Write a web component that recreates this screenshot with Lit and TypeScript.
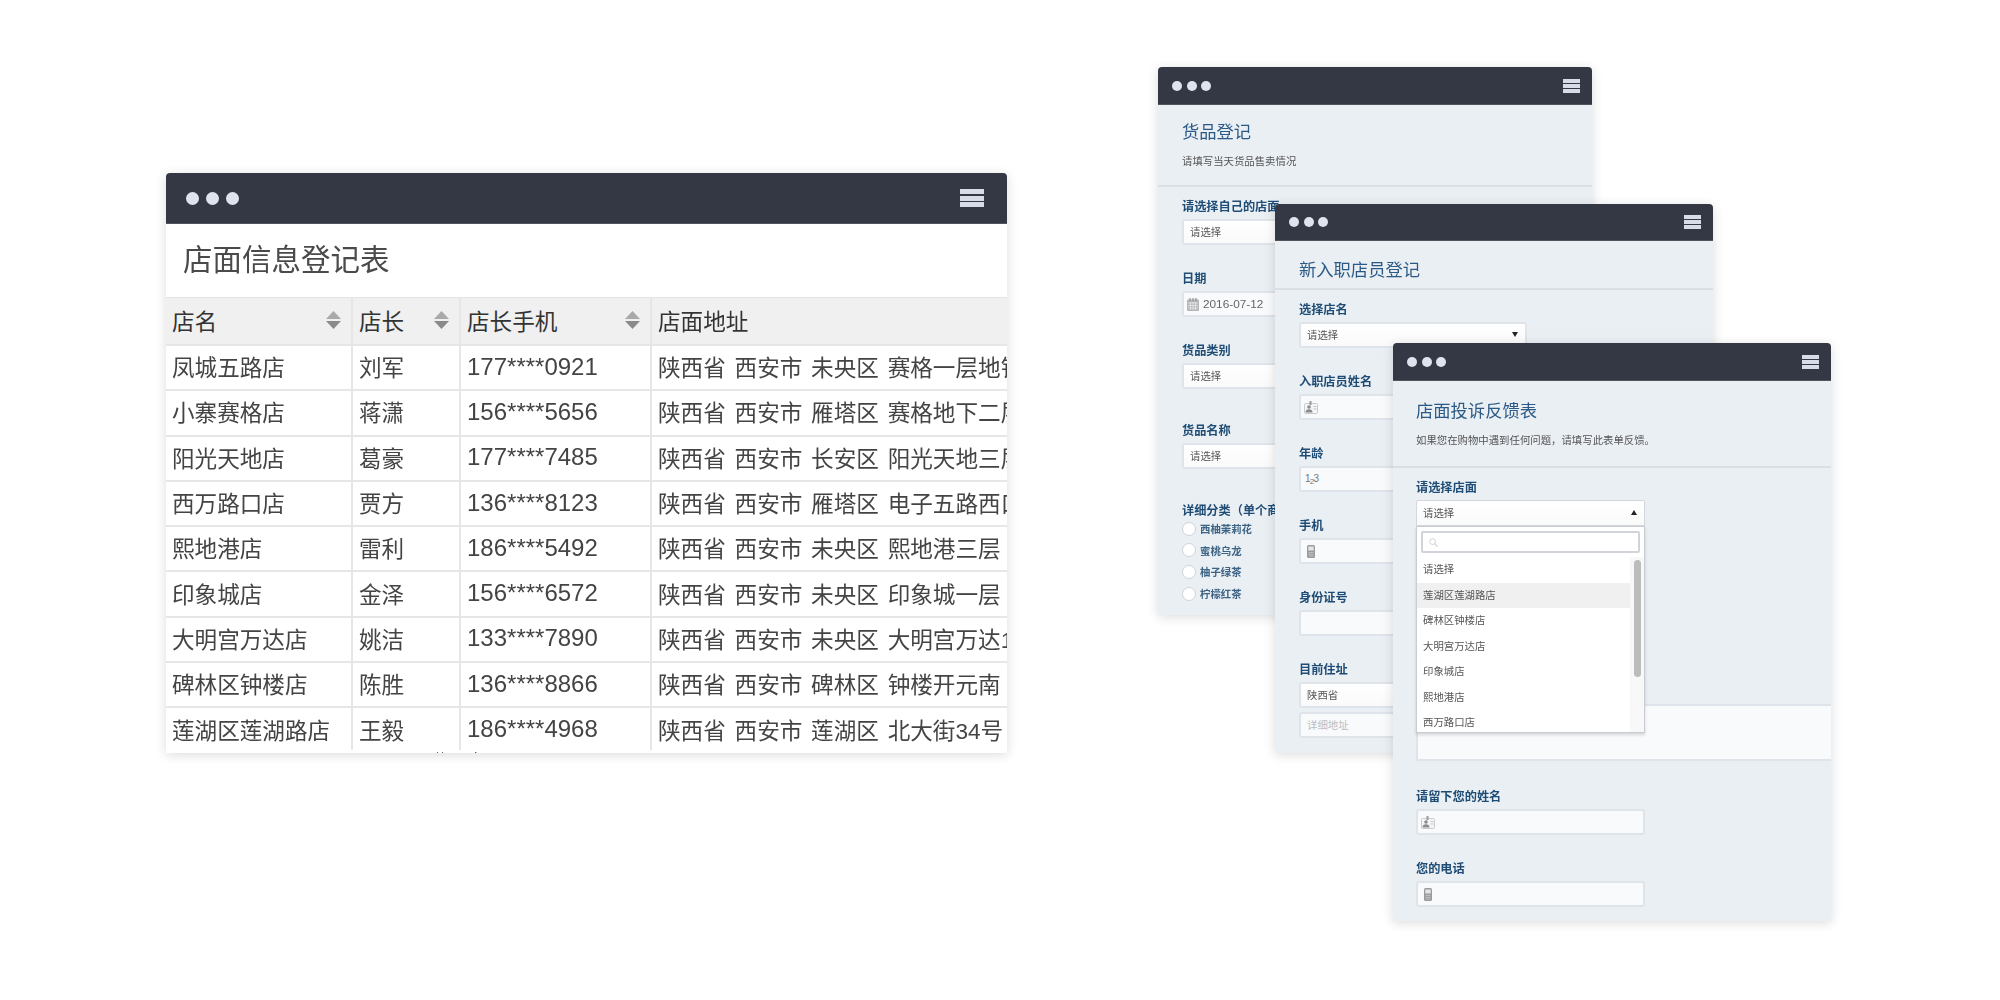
import { html, css, LitElement, TemplateResult } from 'lit';
import { customElement } from 'lit/decorators.js';
import { classMap } from 'lit/directives/class-map.js';

const ROWS = [
	['凤城五路店', '刘军', '177****0921', '陕西省 西安市 未央区 赛格一层地铁口'],
	['小寨赛格店', '蒋潇', '156****5656', '陕西省 西安市 雁塔区 赛格地下二层'],
	['阳光天地店', '葛豪', '177****7485', '陕西省 西安市 长安区 阳光天地三层'],
	['西万路口店', '贾方', '136****8123', '陕西省 西安市 雁塔区 电子五路西口'],
	['熙地港店', '雷利', '186****5492', '陕西省 西安市 未央区 熙地港三层'],
	['印象城店', '金泽', '156****6572', '陕西省 西安市 未央区 印象城一层'],
	['大明宫万达店', '姚洁', '133****7890', '陕西省 西安市 未央区 大明宫万达1层'],
	['碑林区钟楼店', '陈胜', '136****8866', '陕西省 西安市 碑林区 钟楼开元南'],
	['莲湖区莲湖路店', '王毅', '186****4968', '陕西省 西安市 莲湖区 北大街34号'],
];

const STORES = ['请选择', '莲湖区莲湖路店', '碑林区钟楼店', '大明宫万达店', '印象城店', '熙地港店', '西万路口店'];

const sortIcon = html`<svg class="sort" viewBox="0 0 15 18" width="15" height="18">
	<path d="M7.5 0L15 8H0z" fill="#a9a9a9"></path>
	<path d="M0 10h15l-7.5 8z" fill="#8a8a8a"></path>
</svg>`;

const idIcon = html`<svg class="ico" viewBox="0 0 14 13" width="14" height="13">
	<rect x="0.5" y="2.5" width="13" height="10" rx="1" fill="#f4f5f6" stroke="#c9ccd0"></rect>
	<rect x="5.5" y="0" width="2" height="4" fill="#9a9a9a"></rect>
	<circle cx="5" cy="6" r="1.8" fill="#8b8b8b"></circle>
	<path d="M1.5 11.5c0-2.5 1.5-3.2 3.5-3.2s3.5.7 3.5 3.2z" fill="#8b8b8b"></path>
	<path d="M9.5 5.5h3M9.5 8h3" stroke="#c4c7cb"></path>
</svg>`;

const phoneIcon = html`<svg class="ico phone" viewBox="0 0 8 13" width="8" height="13">
	<rect width="8" height="13" rx="1.5" fill="#9b9b9b"></rect>
	<rect x="1.3" y="1.5" width="5.4" height="4" fill="#e4e6e8"></rect>
	<path d="M1.5 7.5h5M1.5 9.3h5M1.5 11h5" stroke="#c9c9c9" stroke-width="0.8"></path>
</svg>`;

const calendarIcon = html`<svg class="ico" viewBox="0 0 12 13" width="12" height="13">
	<rect y="1.5" width="12" height="11.5" rx="1" fill="#b4b6b9"></rect>
	<path d="M3 0v3M6 0v3M9 0v3" stroke="#8f8f8f" stroke-width="1.2"></path>
	<path d="M1 5h10M1 7.5h10M1 10h10M3.5 4v8M6 4v8M8.5 4v8" stroke="#e8e9ea" stroke-width="0.8"></path>
</svg>`;

const searchIcon = html`<svg viewBox="0 0 9 9" width="9" height="9">
	<circle cx="3.6" cy="3.6" r="2.9" fill="none" stroke="#cfd2d6"></circle>
	<path d="M5.8 5.8L8.6 8.6" stroke="#cfd2d6" stroke-width="1.2"></path>
</svg>`;

@customElement('app-root')
export class AppRoot extends LitElement {
	static styles = css`
		:host {
			display: block;
			position: relative;
			width: 2000px;
			height: 1000px;
			overflow: hidden;
			background: #fff;
			font-family: "Liberation Sans", "Noto Sans CJK SC", sans-serif;
		}

		.window {
			position: absolute;
			display: flex;
			flex-direction: column;
			overflow: hidden;
			border-radius: 4px 4px 0 0;
			box-shadow: 0 2px 12px rgba(0, 0, 0, 0.14);
			background: #eaeff4;
			filter: blur(0.35px);
		}

		.win-table { left: 166px; top: 173px; width: 841px; height: 580px; background: #fff; }
		.win-goods { left: 1158px; top: 67px; width: 434px; height: 548px; }
		.win-staff { left: 1275px; top: 204px; width: 438px; height: 549px; }
		.win-feedback { left: 1393px; top: 343px; width: 438px; height: 578px; }

		.titlebar {
			flex: none;
			display: flex;
			align-items: center;
			justify-content: space-between;
			height: 38px;
			padding: 0 12px 0 14px;
			box-sizing: border-box;
			background: #343844;
			border-bottom: 1px solid #50545f;
		}

		.win-staff .titlebar { height: 37px; }

		.dots { display: flex; gap: 4.5px; }
		.dots i { width: 10px; height: 10px; border-radius: 50%; background: #dfe3ee; }
		.burger { display: flex; flex-direction: column; gap: 1px; width: 17px; }
		.burger i { height: 4px; background: #d8dce8; }

		.win-table .titlebar { height: 51px; padding: 0 23px 0 20px; }
		.win-table .dots { gap: 7px; }
		.win-table .dots i { width: 13px; height: 13px; }
		.win-table .burger { width: 24px; gap: 1.5px; }
		.win-table .burger i { height: 5px; }

		/* table window */
		.sheet-title {
			flex: none;
			height: 73px;
			padding: 0 17px 7px;
			display: flex;
			align-items: center;
			box-sizing: border-box;
			font-size: 29.5px;
			color: #4a4a4a;
		}

		.sheet { flex: none; height: 453px; overflow: hidden; font-size: 22.6px; color: #444; word-spacing: 2.5px; }

		.row {
			display: grid;
			grid-template-columns: 187px 108px 191px 400px;
			height: 45.3px;
			box-sizing: border-box;
			border-bottom: 2px solid #e6e6e6;
		}

		.row > div {
			display: flex;
			align-items: center;
			justify-content: space-between;
			padding: 0 10px 2px 6px;
			white-space: nowrap;
			border-right: 2px solid #e6e6e6;
			min-width: 0;
		}

		.row.head { height: 49px; background: #f0f0f0; color: #333; border-top: 1px solid #e4e4e4; }
		.phone-no { font-size: 24px; }
		.sheet-foot { flex: none; height: 3px; padding-left: 267px; font-size: 14px; line-height: 18px; color: #333; overflow: hidden; }

		/* form windows */
		.form-head { flex: none; padding: 15px 24px 15px; border-bottom: 2px solid #d9dfe5; }
		.form-head h2 { margin: 0; font-size: 17.3px; line-height: 24px; font-weight: 400; color: #2a5a85; white-space: nowrap; }
		.form-head p { margin: 10px 0 0; font-size: 10.4px; line-height: 16px; color: #555; }
		.win-staff .form-head { padding: 17px 24px 6px; }
		.win-feedback .form-head { padding: 18px 23px 17px; }
		.form-body { padding: 12px 24px 0; }
		.win-feedback .form-body { padding: 12px 23px 0; }

		.field { margin-bottom: 26px; width: 228px; }
		.field.push-sm { margin-top: 34px; }
		.field.push-lg { margin-top: 34px; }
		.field.wide { width: auto; margin: 178px -23px 28px 0; }
		.field.tight { margin-bottom: 0; }
		.win-feedback .field { width: 229px; }
		.win-feedback .field.wide { width: auto; }
		.label { height: 16px; line-height: 17px; margin-bottom: 4px; font-size: 12.2px; font-weight: 700; color: #1e4c74; white-space: nowrap; }

		.control {
			position: relative;
			display: flex;
			align-items: center;
			justify-content: space-between;
			height: 26px;
			padding: 0 6px 2px;
			box-sizing: border-box;
			border: 2px solid #dfe4ea;
			border-radius: 3px;
			background: #f8fafc;
			font-size: 10.4px;
			color: #555;
		}

		.control + .control { margin-top: 4px; }
		.control.select { background: linear-gradient(#fff, #fafafa); }
		.control.iconed { justify-content: flex-start; padding: 0 0 0 3px; gap: 4px; }
		.control.hint { color: #b9bec4; }
		.date { font-size: 11.8px; color: #666; }
		.num { font-size: 10px; letter-spacing: -0.8px; color: #777; padding: 0 0 2px 1px; }
		.num span { position: relative; top: 2px; font-size: 8px; }
		.ico { flex: none; }
		.ico.phone { margin-left: 3px; }
		.area { height: 57px; border-radius: 0; border-right: none; }

		.arrow { width: 0; height: 0; border: 3.5px solid transparent; border-top: 5px solid #222; border-bottom: none; margin-right: 1px; }
		.arrow.up { border-top: none; border-bottom: 5px solid #222; }

		.radios { margin-top: -5px; }
		.radio { display: flex; align-items: center; gap: 4px; height: 21.6px; font-size: 10.4px; font-weight: 700; color: #3d6485; }
		.radio i { width: 14px; height: 14px; box-sizing: border-box; border-radius: 50%; background: #fff; border: 1px solid #cdd3da; }

		.open { border: 1px solid #d3d7dc; border-radius: 2px 2px 0 0; }

		/* dropdown lies over the fields below it */
		.dropdown {
			position: absolute;
			z-index: 2;
			left: -1px;
			right: -1px;
			top: 25px;
			height: 207px;
			box-sizing: border-box;
			display: flex;
			flex-direction: column;
			background: #fff;
			border: 1px solid #c9cdd2;
			box-shadow: 0 2px 3px rgba(0, 0, 0, 0.15);
			overflow: hidden;
		}

		.search {
			flex: none;
			display: flex;
			align-items: center;
			height: 22px;
			margin: 4px 4px 4px;
			padding-left: 6px;
			box-sizing: border-box;
			border: 2px solid #d0d4da;
			border-radius: 2px;
		}

		.list { flex: 1; display: flex; min-height: 0; }
		.items { flex: 1; }
		.items div { height: 25.5px; line-height: 25.5px; padding-left: 6px; font-size: 10.4px; color: #555; }
		.items .on { background: #f0f0f0; }
		.scroll { flex: none; width: 14px; padding: 3px 3px 0 4px; box-sizing: border-box; background: #f8f8f8; }
		.scroll i { display: block; height: 117px; border-radius: 4px; background: #bcbcbc; }
	`;

	private titlebar() {
		return html`<div class="titlebar">
			<div class="dots"><i></i><i></i><i></i></div>
			<div class="burger"><i></i><i></i><i></i></div>
		</div>`;
	}

	private field(label: string, control: TemplateResult, cls = '') {
		return html`<div class="field ${cls}">
			<div class="label">${label}</div>
			${control}
		</div>`;
	}

	private select(text = '请选择', arrow = false) {
		return html`<div class="control select">
			<span>${text}</span>
			${arrow ? html`<span class="arrow"></span>` : ''}
		</div>`;
	}

	private iconed(icon: TemplateResult | string) {
		return html`<div class="control iconed">${icon}</div>`;
	}

	private renderTable() {
		return html`<section class="window win-table">
			${this.titlebar()}
			<div class="sheet-title">店面信息登记表</div>
			<div class="sheet">
				<div class="row head">
					<div>店名${sortIcon}</div>
					<div>店长${sortIcon}</div>
					<div>店长手机${sortIcon}</div>
					<div>店面地址</div>
				</div>
				${ROWS.map(r => html`<div class="row">
					<div>${r[0]}</div>
					<div>${r[1]}</div>
					<div class="phone-no">${r[2]}</div>
					<div>${r[3]}</div>
				</div>`)}
			</div>
			<div class="sheet-foot">共 55 条</div>
		</section>`;
	}

	private renderGoods() {
		return html`<section class="window win-goods">
			${this.titlebar()}
			<div class="form-head">
				<h2>货品登记</h2>
				<p>请填写当天货品售卖情况</p>
			</div>
			<div class="form-body">
				${this.field('请选择自己的店面', this.select())}
				${this.field('日期', html`<div class="control iconed">${calendarIcon}<span class="date">2016-07-12</span></div>`)}
				${this.field('货品类别', this.select())}
				${this.field('货品名称', this.select(), 'push-sm')}
				${this.field('详细分类（单个商品）', html`<div class="radios">
					${['西柚茉莉花', '蜜桃乌龙', '柚子绿茶', '柠檬红茶'].map(t => html`<div class="radio"><i></i>${t}</div>`)}
				</div>`, 'push-lg tight')}
			</div>
		</section>`;
	}

	private renderStaff() {
		return html`<section class="window win-staff">
			${this.titlebar()}
			<div class="form-head"><h2>新入职店员登记</h2></div>
			<div class="form-body">
				${this.field('选择店名', this.select('请选择', true))}
				${this.field('入职店员姓名', this.iconed(idIcon))}
				${this.field('年龄', this.iconed(html`<span class="num">1<span>2</span>3</span>`))}
				${this.field('手机', this.iconed(phoneIcon))}
				${this.field('身份证号', this.iconed(''))}
				${this.field('目前住址', html`
					${this.select('陕西省')}
					<div class="control hint">详细地址</div>
				`)}
			</div>
		</section>`;
	}

	private renderFeedback() {
		return html`<section class="window win-feedback">
			${this.titlebar()}
			<div class="form-head">
				<h2>店面投诉反馈表</h2>
				<p>如果您在购物中遇到任何问题，请填写此表单反馈。</p>
			</div>
			<div class="form-body">
				${this.field('请选择店面', html`<div class="control select open">
					<span>请选择</span><span class="arrow up"></span>
					<div class="dropdown">
						<div class="search">${searchIcon}</div>
						<div class="list">
							<div class="items">
								${STORES.map((s, i) => html`<div class=${classMap({ on: i === 1 })}>${s}</div>`)}
							</div>
							<div class="scroll"><i></i></div>
						</div>
					</div>
				</div>`)}
				<div class="field wide">
					<div class="control area"></div>
				</div>
				${this.field('请留下您的姓名', this.iconed(idIcon))}
				${this.field('您的电话', this.iconed(phoneIcon))}
			</div>
		</section>`;
	}

	render() {
		return html`${this.renderTable()}${this.renderGoods()}${this.renderStaff()}${this.renderFeedback()}`;
	}
}

declare global {
	interface HTMLElementTagNameMap {
		"app-root": AppRoot,
	}
}
